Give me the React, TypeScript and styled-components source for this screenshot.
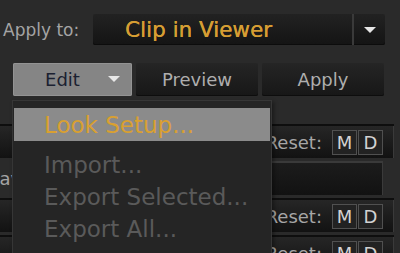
import React from "react";
import styled, { createGlobalStyle } from "styled-components";

const GlobalStyle = createGlobalStyle`
  html, body {
    margin: 0;
    padding: 0;
    background: #2a2a2a;
  }
  body {
    font-family: "DejaVu Sans", "Liberation Sans", sans-serif;
    overflow: hidden;
  }
`;

const Panel = styled.div`
  position: relative;
  width: 394px;
  height: 253px;
  padding-top: 14px;
  box-sizing: border-box;
  overflow: hidden;
`;

const TopRow = styled.div`
  display: flex;
  align-items: center;
  height: 31px;
  padding-left: 3px;
`;

const Label = styled.span`
  width: 90px;
  flex: none;
  font-size: 17px;
  color: #a4a4a4;
`;

const Dropdown = styled.div`
  display: flex;
  width: 292px;
  height: 31px;
  border-radius: 2px;
  background: linear-gradient(#222222, #141414);
  box-shadow: inset 0 -1px 0 #0c0c0c;
`;

const DropdownValue = styled.div`
  flex: 1;
  display: flex;
  align-items: center;
  padding-left: 32px;
  font-size: 21.5px;
  color: #d69e33;
  text-shadow: 0.3px 0 0 #d69e33;
`;

const DropdownArrow = styled.div`
  width: 31px;
  display: flex;
  align-items: center;
  justify-content: center;
  border-left: 2px solid #3a3a3a;
`;

const Caret = styled.span<{ $color: string }>`
  width: 0;
  height: 0;
  border-left: 6px solid transparent;
  border-right: 6px solid transparent;
  border-top: 6px solid ${(p) => p.$color};
`;

const ButtonRow = styled.div`
  display: flex;
  gap: 4px;
  margin-top: 18px;
  padding-left: 13px;
  height: 33px;
`;

const Button = styled.div<{ $active?: boolean; $width: number }>`
  position: relative;
  width: ${(p) => p.$width}px;
  display: flex;
  align-items: center;
  justify-content: center;
  font-size: 18px;
  border-radius: 2px;
  color: ${(p) => (p.$active ? "#1b2131" : "#aeaeae")};
  background: ${(p) =>
    p.$active ? "#858585" : "linear-gradient(#252525, #171717)"};
  box-shadow: ${(p) =>
    p.$active ? "inset 0 0 0 1px #939393" : "inset 0 -1px 0 #0d0d0d"};
`;

const EditLabel = styled.span`
  margin-right: 20px;
`;

const EditCaret = styled.span`
  position: absolute;
  right: 12px;
  top: 13px;
  display: flex;
`;

const RowList = styled.div`
  display: flex;
  flex-direction: column;
  gap: 3px;
  margin-top: 28px;
`;

const Row = styled.div<{ $plain?: boolean }>`
  display: flex;
  align-items: center;
  height: 34px;
  box-sizing: border-box;
  padding-right: 11px;
  background: ${(p) =>
    p.$plain ? "transparent" : "linear-gradient(#262626, #121212)"};
  border-top: ${(p) => (p.$plain ? "none" : "2px solid #0e0e0e")};
  box-shadow: ${(p) => (p.$plain ? "none" : "inset -1px 0 0 #3a3a3a")};
`;

const SaveLabel = styled.span`
  margin-left: -12px;
  font-size: 18px;
  color: #a4a4a4;
`;

const Field = styled.div`
  flex: 1;
  align-self: stretch;
  margin-left: 60px;
  background: linear-gradient(#1c1c1c, #121212);
  border-top: 2px solid #3a3a3a;
  box-shadow: inset -1px 0 0 #3a3a3a;
`;

const ResetText = styled.span`
  margin-left: auto;
  margin-right: 10px;
  font-size: 18px;
  color: #a6a6a6;
`;

const FlagBox = styled.span`
  width: 23px;
  height: 23px;
  display: flex;
  align-items: center;
  justify-content: center;
  border: 1px solid #505050;
  background: #222222;
  color: #d2d2d2;
  font-size: 18px;
  & + & {
    margin-left: 1px;
  }
`;

const Menu = styled.div`
  position: absolute;
  left: 12px;
  top: 100px;
  width: 260px;
  height: 170px;
  box-sizing: border-box;
  padding: 7px 1px 0;
  background: #252525;
  border: 1px solid #363636;
  box-shadow: 2px 2px 4px rgba(0, 0, 0, 0.4);
`;

const MenuItem = styled.div<{ $highlight?: boolean }>`
  display: flex;
  align-items: center;
  height: ${(p) => (p.$highlight ? 33 : 32)}px;
  margin-bottom: ${(p) => (p.$highlight ? 8 : 0)}px;
  padding-left: 30px;
  font-size: 23px;
  color: ${(p) => (p.$highlight ? "#d9a031" : "#5a5a5a")};
  background: ${(p) => (p.$highlight ? "#8b8b8b" : "transparent")};
`;

const ResetControls = () => (
  <>
    <ResetText>Reset:</ResetText>
    <FlagBox>M</FlagBox>
    <FlagBox>D</FlagBox>
  </>
);

export default function App() {
  return (
    <>
      <GlobalStyle />
      <Panel>
        <TopRow>
          <Label>Apply to:</Label>
          <Dropdown>
            <DropdownValue>Clip in Viewer</DropdownValue>
            <DropdownArrow>
              <Caret $color="#e6e6e6" />
            </DropdownArrow>
          </Dropdown>
        </TopRow>

        <ButtonRow>
          <Button $active $width={119}>
            <EditLabel>Edit</EditLabel>
            <EditCaret>
              <Caret $color="#e8e8e8" />
            </EditCaret>
          </Button>
          <Button $width={122}>Preview</Button>
          <Button $width={122}>Apply</Button>
        </ButtonRow>

        <RowList>
          <Row>
            <ResetControls />
          </Row>
          <Row $plain>
            <SaveLabel>Save</SaveLabel>
            <Field />
          </Row>
          <Row>
            <ResetControls />
          </Row>
          <Row>
            <ResetControls />
          </Row>
        </RowList>

        <Menu>
          <MenuItem $highlight>Look Setup...</MenuItem>
          <MenuItem>Import...</MenuItem>
          <MenuItem>Export Selected...</MenuItem>
          <MenuItem>Export All...</MenuItem>
        </Menu>
      </Panel>
    </>
  );
}
